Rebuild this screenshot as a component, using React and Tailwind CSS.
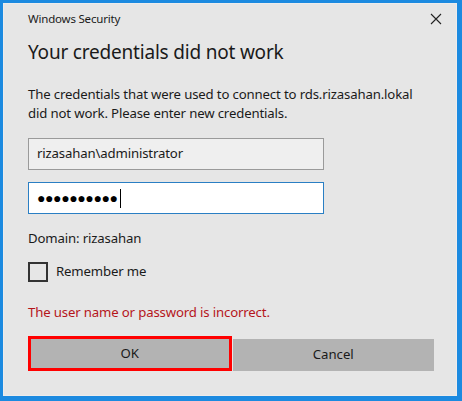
export default function App() {
  const font = { fontFamily: '"Noto Sans", "Open Sans", sans-serif' };
  return (
    <div className="w-[462px] h-[401px] bg-[#1c8ae0] pl-[3px] pt-[3px] pr-[5px] pb-[5px]" style={font}>
      <div className="w-full h-full bg-[#e6e6e6] border border-[#ececec] flex flex-col pl-[24px] pr-[22px] text-[#1a1a1a]">
        <div className="flex items-center justify-between h-[16px] mt-[7px] -mr-[8px]">
          <span className="text-[11.5px] leading-[16px] tracking-[-0.2px]">Windows Security</span>
          <svg width="12" height="12" viewBox="0 0 12 12">
            <path d="M1 1 L11 11 M11 1 L1 11" stroke="#222" strokeWidth="1.1" fill="none" />
          </svg>
        </div>
        <div className="mt-[11px] h-[28px] text-[19px] leading-[28px] tracking-[-0.2px]">Your credentials did not work</div>
        <div className="mt-[19px] text-[13.2px] leading-[19px] tracking-[-0.15px]">
          <div>The credentials that were used to connect to rds.rizasahan.lokal</div>
          <div>did not work. Please enter new credentials.</div>
        </div>
        <div className="mt-[15px] w-[296px] h-[32px] bg-[#efefef] border border-[#9a9a9a] flex items-center pl-[8px] text-[13.2px] tracking-[-0.15px]">
          rizasahan\administrator
        </div>
        <div className="mt-[12px] w-[296px] h-[32px] bg-white border border-[#2a7fc4] flex items-center pl-[8px]">
          <span className="text-[14px] leading-none tracking-[-0.4px] text-black">●●●●●●●●●●</span>
          <span className="ml-[2px] w-[1px] h-[19px] bg-black"></span>
        </div>
        <div className="mt-[15px] text-[13.2px] leading-[19px] tracking-[-0.15px]">Domain: rizasahan</div>
        <div className="mt-[14px] flex items-center h-[20px]">
          <div className="w-[20px] h-[20px] border-2 border-[#333333]"></div>
          <span className="ml-[8px] text-[13.2px] tracking-[-0.15px]">Remember me</span>
        </div>
        <div className="mt-[21px] text-[13.2px] leading-[19px] tracking-[-0.15px] text-[#b5151b]">The user name or password is incorrect.</div>
        <div className="mt-[14px] flex items-end h-[35px]">
          <div className="w-[204px] h-[35px] border-[3px] border-[#ff0000] bg-[#b3b3b3] flex items-center justify-center text-[13.2px]">OK</div>
          <div className="ml-[1px] w-[202px] h-[32px] bg-[#b3b3b3] flex items-center justify-center text-[13.2px]">Cancel</div>
        </div>
      </div>
    </div>
  );
}
